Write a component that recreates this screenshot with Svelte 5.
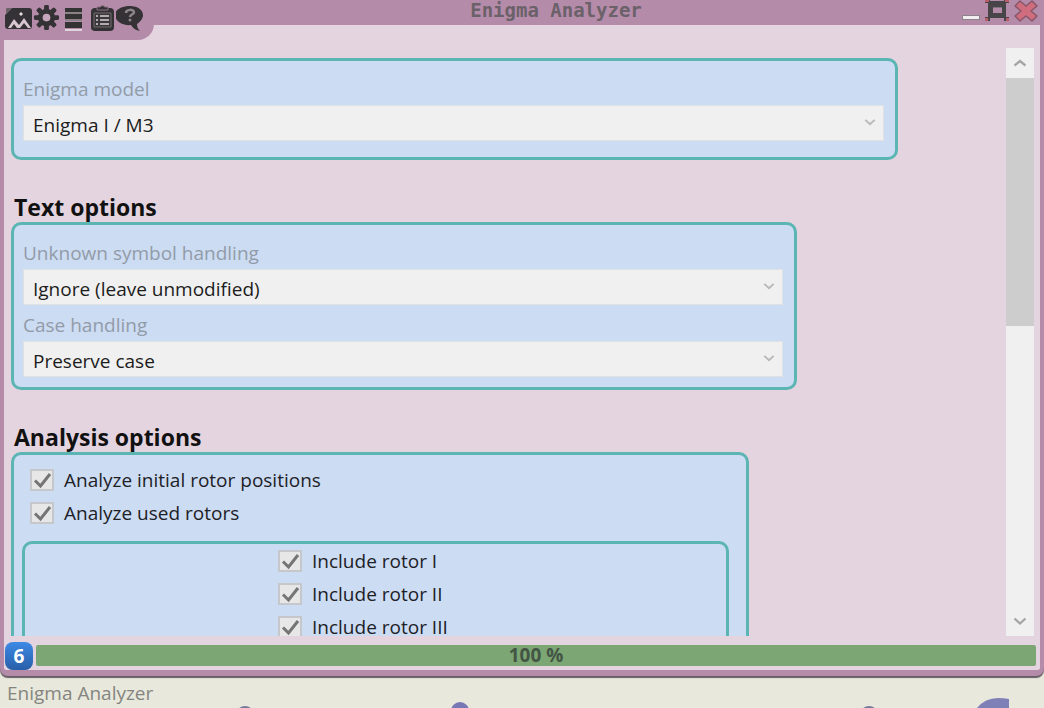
<script>
  const rotors = ['I', 'II', 'III'];
</script>

{#snippet chevron(up)}
  <svg class="chevron" viewBox="0 0 14 10" width="14" height="10" aria-hidden="true">
    <path d={up ? 'M1.5 7.5 7 3l5.5 4.5' : 'M1.5 2.5 7 7.5l5.5-5'} fill="none" stroke="currentColor" stroke-width="2.3" />
  </svg>
{/snippet}

{#snippet check(label)}
  <label class="check">
    <span class="box">
      <input type="checkbox" checked />
      <svg viewBox="0 0 24 22" width="24" height="22" aria-hidden="true">
        <path d="M5 11.5 10.5 17 20 5" fill="none" stroke="#757575" stroke-width="3" />
      </svg>
    </span>
    {label}
  </label>
{/snippet}

<div class="page">
  <section class="window">
    <header>
      <nav>
        <button class="tool" aria-label="Presentation">
          <svg viewBox="0 0 28 26" width="28" height="26">
            <path d="M7 3h17q3 0 3 3v15q0 3-3 3H3q-3 0-3-3V10z" fill="#343234" />
            <path d="M1 9V4q0-1 1-1h5z" fill="#6c636a" />
            <path d="m3 23 6-9 5 6 5-7 7 10h-3l-4-5-4 5h-3l-3-4-3 4z" fill="#d8c7d1" />
            <path d="m16 7 2 2-2 2-2-2z" fill="#e7dae2" />
          </svg>
        </button>
        <button class="tool" aria-label="Settings">
          <svg viewBox="0 0 28 28" width="27" height="27">
            <g fill="#343234">
              <circle cx="14" cy="13" r="9" />
              {#each [0, 45, 90, 135] as angle}
                <rect x="11.5" y="0" width="5" height="26" rx="1.5" transform="rotate({angle} 14 13)" />
              {/each}
            </g>
            <circle cx="14" cy="13" r="4" fill="#c6a6bc" />
          </svg>
        </button>
        <button class="tool" aria-label="Parameters">
          <svg viewBox="0 0 28 26" width="28" height="26">
            <path d="M5 3h17v4H5zm0 6h17v5H5zm0 8h17v6H5z" fill="#333" />
            <path d="M5 7h17v2H5zm0 7h17v2H5z" fill="#8a8287" />
            <path d="M5 24h17v2H5z" fill="#e0d3da" />
          </svg>
        </button>
        <button class="tool" aria-label="Log">
          <svg viewBox="0 0 28 28" width="28" height="28">
            <rect x="3" y="3" width="23" height="23" rx="4" fill="#343234" />
            <path d="M9 5V2h3q2.500-3 5 0h3v3z" fill="#343234" stroke="#8b7184" />
            <path d="M6 8h17v14H6z" fill="#3b383a" stroke="#756b71" />
            <path d="M8 11h2m2 0h9M8 15h2m2 0h9M8 19h2m2 0h9" stroke="#ddd1d9" stroke-width="1.5" />
          </svg>
        </button>
        <button class="tool" aria-label="Help">
          <svg viewBox="0 0 28 28" width="28" height="28">
            <path d="M14 1c8 0 13 4 13 9 0 4-3 7-6 9 0 3 1 5 3 7-5-1-7-3-9-6-9 1-16-4-16-10 0-5 6-9 15-9z" fill="#343234" />
            <path d="M10 8c0-4 8-4 8-1 0 3-4 2-4 5" fill="none" stroke="#8c868a" stroke-width="2.5" />
            <circle cx="14" cy="15" r="1.5" fill="#8c868a" />
          </svg>
        </button>
      </nav>
      <h1>Enigma Analyzer</h1>
      <div class="controls">
        <button aria-label="Minimize">
          <svg viewBox="0 0 18 24" width="18" height="24">
            <path d="M0 15h18v5H0z" fill="#8c8289" /><path d="M1 16h16v3H1z" fill="#f2edf0" />
          </svg>
        </button>
        <button aria-label="Maximize">
          <svg viewBox="0 0 26 24" width="26" height="24">
            <path d="M1 0h5v1h14V0h5v3h-3v14h3v4h-5v-3H6v3H1v-4h3V3H1z" fill="#474548" />
            <path d="M9 7h9v6H9z" fill="#b48ba8" /><path d="M9 7h9v1H9z" fill="#847180" />
            <path d="M1 0h4v2H1zm20 0h4v2h-4zM1 18h3v3H1zm21 0h3v3h-3z" fill="#bd5c69" />
          </svg>
        </button>
        <button aria-label="Close">
          <svg viewBox="0 0 24 24" width="24" height="24">
            <path d="m6 1 6 5 6-5 5 5-6 5 6 5-5 5-6-5-6 5-5-5 6-5-6-5z" fill="#cf6c7d" stroke="#875769" stroke-width="1.5" stroke-linejoin="round" />
          </svg>
        </button>
      </div>
    </header>

    <main>
      <div class="content">
        <div class="panel model">
          <label class="caption" for="model">Enigma model</label>
          <div class="field">
            <select id="model"><option>Enigma I / M3</option></select>
            {@render chevron(false)}
          </div>
        </div>

        <h2>Text options</h2>
        <div class="panel text">
          <label class="caption" for="unknown">Unknown symbol handling</label>
          <div class="field">
            <select id="unknown"><option>Ignore (leave unmodified)</option></select>
            {@render chevron(false)}
          </div>
          <label class="caption" for="case">Case handling</label>
          <div class="field">
            <select id="case"><option>Preserve case</option></select>
            {@render chevron(false)}
          </div>
        </div>

        <h2>Analysis options</h2>
        <div class="panel analysis">
          <div class="checks">
            {@render check('Analyze initial rotor positions')}
            {@render check('Analyze used rotors')}
          </div>
          <div class="panel rotors">
            {#each rotors as rotor}
              {@render check(`Include rotor ${rotor}`)}
            {/each}
          </div>
        </div>
      </div>

      <div class="scrollbar">
        <button aria-label="Scroll up">{@render chevron(true)}</button>
        <div class="track"><div class="thumb"></div></div>
        <button aria-label="Scroll down">{@render chevron(false)}</button>
      </div>
    </main>

    <div class="status">
      <button class="badge">6</button>
      <div class="progress" role="progressbar" aria-label="Progress" aria-valuenow="100">100 %</div>
    </div>
  </section>

  <footer>
    Enigma Analyzer
    <svg class="nodes" viewBox="0 0 1044 30" aria-hidden="true">
      <circle cx="245" cy="37" r="9" fill="#77779a" />
      <circle cx="460" cy="33" r="9" fill="#7777b5" />
      <circle cx="869" cy="37" r="9" fill="#77779a" />
      <path d="M977 30q8-10 21-10 6 0 11 1v9z" fill="#8080b8" />
    </svg>
  </footer>
</div>

<style>
  :global(body) { background: #e8e8dc; }
  * { box-sizing: border-box; }
  button { border: 0; padding: 0; background: none; font: inherit; }
  svg { display: block; flex: none; }

  .page {
    display: flex;
    flex-direction: column;
    height: 100vh;
    font: 19px/24px "Open Sans", "Noto Sans", sans-serif;
    color: #1d2126;
  }
  .window {
    flex: 1;
    min-height: 0;
    display: flex;
    flex-direction: column;
    background: #e4d4df;
    border: solid #b58baa;
    border-width: 0 4px 6px;
    border-radius: 0 0 8px 8px;
    box-shadow: 0 2px 1px #665c63;
  }

  header {
    display: flex;
    height: 25px;
    margin: 0 -4px;
    background: #b58baa;
  }
  nav {
    position: relative;
    z-index: 1;
    display: flex;
    flex: none;
    width: 154px;
    height: 40px;
    padding: 5px 0 0 5px;
    background: #b58baa;
    border-bottom-right-radius: 16px;
  }
  .tool { display: flex; height: 28px; }
  h1 {
    flex: 1;
    margin: 0;
    text-align: center;
    font: bold 19px/20px "DejaVu Sans Mono", monospace;
    color: #6b6169;
  }
  .controls {
    display: flex;
    flex: none;
    align-items: flex-start;
    justify-content: flex-end;
    gap: 4px;
    width: 86px;
    padding-right: 6px;
  }

  main { flex: 1; display: flex; min-height: 0; }
  .content { flex: 1; overflow: hidden; padding: 33px 12px 0 7px; }
  .panel {
    background: #ccdcf3;
    border: 3px solid #5bb5b3;
    border-radius: 10px;
    padding: 12px 11px 10px 9px;
  }
  .model { max-width: 887px; padding-bottom: 16px; }
  .text { max-width: 786px; }
  .analysis { max-width: 738px; padding: 8px 17px 16px 8px; }
  h2 {
    margin: 32px 0 0 3px;
    font: bold 23px/30px "Open Sans", "Noto Sans", sans-serif;
    color: #111;
  }
  .caption { display: block; line-height: 32px; color: #929ba8; }
  .field + .caption { margin-top: 4px; }
  .field { display: grid; align-items: center; }
  .field > :global(*) { grid-area: 1 / 1; }
  .field .chevron { justify-self: end; width: 12px; margin: 0 8px 2px 0; color: #b9b9b9; }
  select {
    appearance: none;
    width: 100%;
    height: 36px;
    padding: 3px 9px 0;
    border: 1px solid #dfe1e4;
    border-radius: 0;
    background: #f0f0f0;
    color: #1c1c1c;
    font: inherit;
  }
  .check { display: flex; align-items: center; gap: 10px; height: 33px; line-height: 18px; }
  .checks { padding-left: 8px; }
  .rotors { margin-top: 12px; padding: 0 0 24px 253px; }
  .box { display: grid; }
  .box > * { grid-area: 1 / 1; }
  .box input {
    appearance: none;
    width: 24px;
    height: 22px;
    margin: 0;
    border: 2px solid #c5c7ca;
    background: #e7e7e7;
  }
  .box svg { pointer-events: none; }

  .scrollbar {
    display: flex;
    flex-direction: column;
    width: 28px;
    margin: 23px 6px 0 0;
    background: #f0f0f0;
  }
  .scrollbar button {
    display: grid;
    place-items: center;
    height: 30px;
    color: #a5a5a5;
  }
  .track { flex: 1; }
  .thumb { height: 47%; background: #cdcdcd; }

  .status { display: flex; gap: 3px; height: 34px; padding: 6px 4px 0 1px; }
  .badge {
    width: 28px;
    height: 28px;
    border-radius: 8px;
    background: linear-gradient(#3d8ae6, #285fa8);
    color: #fff;
    font-weight: bold;
  }
  .progress {
    flex: 1;
    height: 21px;
    margin-top: 3px;
    background: #7da675;
    border-radius: 2px;
    text-align: center;
    font-weight: bold;
    line-height: 21px;
    color: #435544;
  }

  footer {
    position: relative;
    flex: none;
    height: 32px;
    padding-left: 7px;
    line-height: 35px;
    color: #858580;
    overflow: hidden;
  }
  .nodes { position: absolute; left: 0; bottom: 0; width: 100%; }
</style>
